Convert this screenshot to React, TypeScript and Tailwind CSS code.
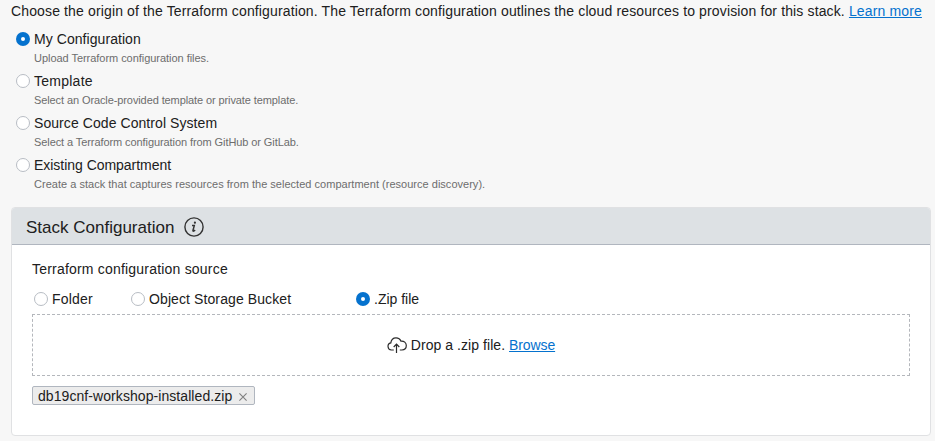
import type { ReactNode } from "react";

function Radio({ checked = false }: { checked?: boolean }) {
  return (
    <span
      className={
        checked
          ? "flex size-3.5 shrink-0 items-center justify-center rounded-full bg-[#0572ce]"
          : "size-3.5 shrink-0 rounded-full border border-[#b8bdc4] bg-white"
      }
    >
      {checked && <span className="size-1 rounded-full bg-white" />}
    </span>
  );
}

function Choice({
  checked,
  tracking = "tracking-normal",
  children,
}: {
  checked?: boolean;
  tracking?: string;
  children: ReactNode;
}) {
  return (
    <div className="flex h-5 items-center gap-1 whitespace-nowrap">
      <Radio checked={checked} />
      <span className={tracking}>{children}</span>
    </div>
  );
}

const origins = [
  {
    label: "My Configuration",
    labelTracking: "tracking-[0.06px]",
    detail: "Upload Terraform configuration files.",
    detailTracking: "tracking-[-0.04px]",
  },
  {
    label: "Template",
    labelTracking: "tracking-[0.25px]",
    detail: "Select an Oracle-provided template or private template.",
    detailTracking: "tracking-[-0.1px]",
  },
  {
    label: "Source Code Control System",
    labelTracking: "tracking-[0.07px]",
    detail: "Select a Terraform configuration from GitHub or GitLab.",
    detailTracking: "tracking-[-0.085px]",
  },
  {
    label: "Existing Compartment",
    labelTracking: "tracking-[-0.03px]",
    detail: "Create a stack that captures resources from the selected compartment (resource discovery).",
    detailTracking: "tracking-[0.02px]",
  },
];

function InfoIcon() {
  return (
    <svg className="size-5" viewBox="0 0 20 20" fill="none">
      <circle cx="10" cy="10" r="9.1" stroke="#333" strokeWidth="1.4" />
      <circle cx="10.9" cy="5.7" r="1.1" fill="#333" />
      <path d="M8 8.6h2.3L9 13.2q-.3 1.2.7.9l1.5-1" stroke="#333" strokeWidth="1.5" />
    </svg>
  );
}

function CloudUploadIcon() {
  return (
    <svg className="h-4 w-5" viewBox="0 0 20 16" fill="none" stroke="#2b2b2b" strokeWidth="1.2">
      <path d="M6.8 13H4.4A3.6 3.6 0 0 1 3.8 5.9C4.2 2.7 6.3.8 9 .8c2.3 0 4.2 1.3 4.9 3.3 3.1-.4 5.4 1.7 5.4 4.5 0 2.6-1.8 4.4-4.4 4.4h-2.1" />
      <path d="M9.5 16V7.2M6.7 10l2.8-2.8 2.8 2.8" />
    </svg>
  );
}

export default function App() {
  return (
    <main className="h-[441px] w-[935px] overflow-hidden bg-[#f7f7f7] pl-[11px] pr-1 pt-px font-['Liberation_Sans',Arial,sans-serif] text-sm leading-5 text-[#202020]">
      <p className="whitespace-nowrap tracking-[0.136px]">
        Choose the origin of the Terraform configuration. The Terraform configuration outlines the cloud resources to
        provision for this stack.{" "}
        <a href="#" className="text-[#0572ce] underline decoration-1 underline-offset-1">Learn more</a>
      </p>

      <div className="pl-[5px] pt-2">
        {origins.map((origin, i) => (
          <div key={origin.label} className="h-[42px]">
            <Choice checked={i === 0} tracking={origin.labelTracking}>{origin.label}</Choice>
            <p className={`pl-[18px] text-[11px] leading-[18px] text-[#6d6d6d] ${origin.detailTracking}`}>
              {origin.detail}
            </p>
          </div>
        ))}
      </div>

      <section className="mt-[10px] h-[229px] rounded border border-[#e0e1e3] bg-white">
        <header className="flex h-[37px] items-center gap-2.5 rounded-t-[3px] border-b border-[#b0b6bf] bg-[#dde1e4] pl-[14px] pt-0.5">
          <h2 className="pt-px text-[17px] leading-6">Stack Configuration</h2>
          <InfoIcon />
        </header>
        <div className="px-5 pt-[14px]">
          <p className="tracking-[0.2px]">Terraform configuration source</p>
          <div className="mt-[10px] flex pl-0.5">
            <div className="w-[97px]"><Choice tracking="tracking-[0.22px]">Folder</Choice></div>
            <div className="w-[225px]"><Choice tracking="tracking-[0.1px]">Object Storage Bucket</Choice></div>
            <Choice checked>.Zip file</Choice>
          </div>
          <div className="mt-[5px] flex h-[62px] items-center justify-center gap-1 border border-dashed border-[#b4b7bc]">
            <CloudUploadIcon />
            <span>
              <span className="tracking-[0.05px]">Drop a .zip file. </span>
              <a href="#" className="tracking-[-0.1px] text-[#0572ce] underline decoration-1 underline-offset-1">Browse</a>
            </span>
          </div>
          <div className="mt-[10px] flex h-[19px] w-[223px] items-center rounded-[2px] border border-[#b0b6bf] bg-[#ececec] pl-[5px]">
            <span className="tracking-[0.07px]">db19cnf-workshop-installed.zip</span>
            <svg className="ml-[7px] mt-[3px] size-2" viewBox="0 0 8 8" fill="none" stroke="#808080" strokeWidth="1.1">
              <path d="M.4.4l7.2 7.2M7.6.4L.4 7.6" />
            </svg>
          </div>
        </div>
      </section>
    </main>
  );
}
